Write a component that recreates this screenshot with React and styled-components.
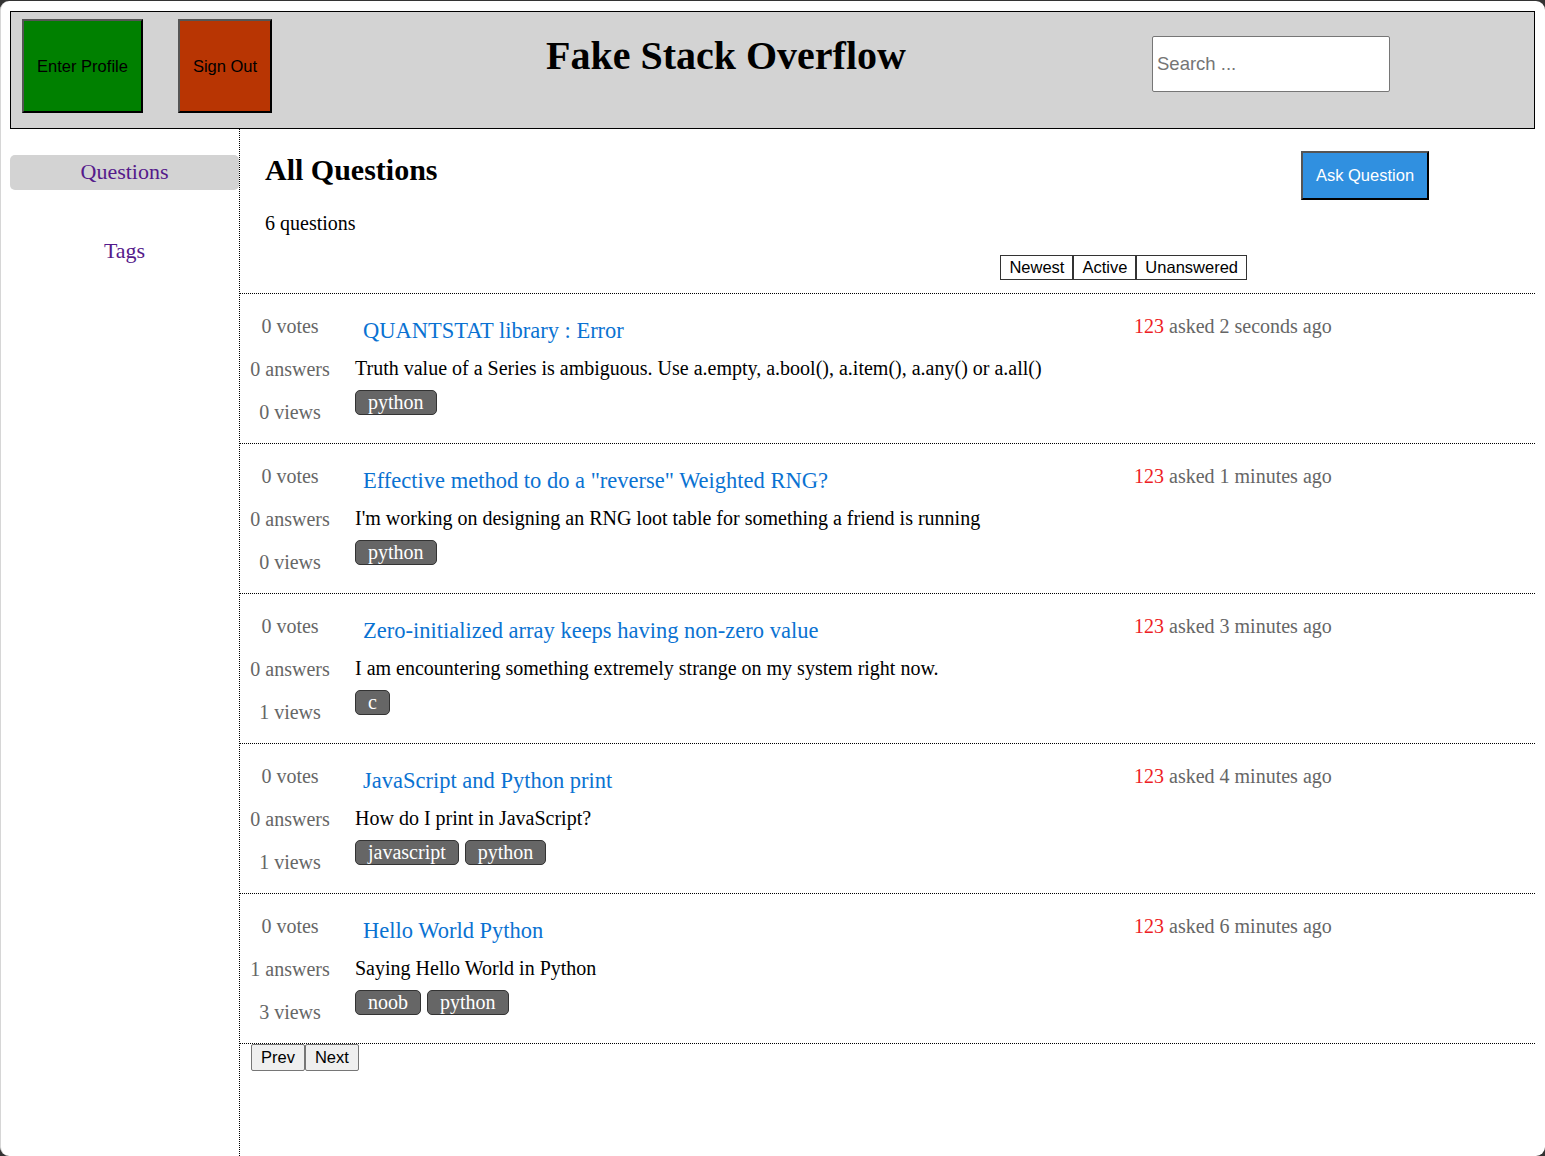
import React from 'react';
import styled, { createGlobalStyle } from 'styled-components';

const GlobalStyle = createGlobalStyle`
  html, body {
    margin: 0;
    padding: 0;
    background: #333;
  }
  body {
    font-family: "Liberation Serif", "Times New Roman", serif;
  }
  * {
    box-sizing: border-box;
  }
`;

const questions = [
  {
    title: 'QUANTSTAT library : Error',
    text: 'Truth value of a Series is ambiguous. Use a.empty, a.bool(), a.item(), a.any() or a.all()',
    tags: ['python'],
    votes: 0,
    answers: 0,
    views: 0,
    asked: '2 seconds ago',
  },
  {
    title: 'Effective method to do a "reverse" Weighted RNG?',
    text: "I'm working on designing an RNG loot table for something a friend is running",
    tags: ['python'],
    votes: 0,
    answers: 0,
    views: 0,
    asked: '1 minutes ago',
  },
  {
    title: 'Zero-initialized array keeps having non-zero value',
    text: 'I am encountering something extremely strange on my system right now.',
    tags: ['c'],
    votes: 0,
    answers: 0,
    views: 1,
    asked: '3 minutes ago',
  },
  {
    title: 'JavaScript and Python print',
    text: 'How do I print in JavaScript?',
    tags: ['javascript', 'python'],
    votes: 0,
    answers: 0,
    views: 1,
    asked: '4 minutes ago',
  },
  {
    title: 'Hello World Python',
    text: 'Saying Hello World in Python',
    tags: ['noob', 'python'],
    votes: 0,
    answers: 1,
    views: 3,
    asked: '6 minutes ago',
  },
];

export default function App() {
  return (
    <>
      <GlobalStyle />
      <Frame>
        <Header>
          <HeaderButton color="#008000" width={121}>Enter Profile</HeaderButton>
          <HeaderButton color="#b83503" width={94} style={{ marginLeft: 35 }}>Sign Out</HeaderButton>
          <SiteTitle>Fake Stack Overflow</SiteTitle>
          <SearchInput placeholder="Search ..." />
        </Header>

        <Body>
          <Sidebar>
            <NavItem active>Questions</NavItem>
            <NavItem>Tags</NavItem>
          </Sidebar>

          <Main>
            <TopRow>
              <PageTitle>All Questions</PageTitle>
              <AskButton>Ask Question</AskButton>
            </TopRow>
            <Count>6 questions</Count>
            <SortBar>
              <SortButton>Newest</SortButton>
              <SortButton>Active</SortButton>
              <SortButton>Unanswered</SortButton>
            </SortBar>

            <QuestionList>
              {questions.map(q => (
                <QuestionRow key={q.title}>
                  <Stats>
                    <Stat>{q.votes} votes</Stat>
                    <Stat>{q.answers} answers</Stat>
                    <Stat>{q.views} views</Stat>
                  </Stats>
                  <Content>
                    <QuestionTitle href="#">{q.title}</QuestionTitle>
                    <QuestionText>{q.text}</QuestionText>
                    <Tags>
                      {q.tags.map(t => (
                        <Tag key={t}>{t}</Tag>
                      ))}
                    </Tags>
                  </Content>
                  <Meta>
                    <Author>123</Author> asked {q.asked}
                  </Meta>
                </QuestionRow>
              ))}
            </QuestionList>

            <Pager>
              <PageButton>Prev</PageButton>
              <PageButton>Next</PageButton>
            </Pager>
          </Main>
        </Body>
      </Frame>
    </>
  );
}

const Frame = styled.div`
  margin-top: 1px;
  height: calc(100vh - 1px);
  background: #fff;
  border-radius: 9px;
  border-left: 1px solid #d6d6d6;
  display: flex;
  flex-direction: column;
  overflow: hidden;
`;

const Header = styled.header`
  margin: 10px 10px 0 9px;
  height: 118px;
  background: #d3d3d3;
  border: 1px solid #000;
  display: flex;
  align-items: flex-start;
  padding: 7px 0 0 11px;
`;

const HeaderButton = styled.button`
  width: ${p => p.width}px;
  height: 94px;
  background: ${p => p.color};
  border: 2px solid;
  border-color: #555 #000 #000 #555;
  font-family: "Liberation Sans", Arial, sans-serif;
  font-size: 16.5px;
  color: #000;
  padding: 0;
`;

const SiteTitle = styled.h1`
  margin: 14px 0 0 274px;
  font-size: 40px;
  line-height: 46px;
  font-weight: bold;
  color: #000;
  white-space: nowrap;
`;

const SearchInput = styled.input`
  margin: 17px 144px 0 auto;
  width: 238px;
  height: 56px;
  border: 1px solid #767676;
  border-radius: 2px;
  padding: 0 4px;
  font-family: "Liberation Sans", Arial, sans-serif;
  font-size: 18.5px;
  background: #fff;

  &::placeholder {
    color: #757575;
  }
`;

const Body = styled.div`
  flex: 1;
  display: flex;
`;

const Sidebar = styled.nav`
  width: 239px;
  flex-shrink: 0;
  border-right: 1px dotted #000;
  padding: 26px 0 0 9px;
  display: flex;
  flex-direction: column;
  gap: 44px;
`;

const NavItem = styled.a`
  display: block;
  text-align: center;
  font-size: 22px;
  line-height: 25px;
  padding: 4px 0 6px;
  color: #551a8b;
  border-radius: 5px;
  background: ${p => (p.active ? '#d3d3d3' : 'transparent')};
  cursor: pointer;
`;

const Main = styled.main`
  flex: 1;
  display: flex;
  flex-direction: column;
  margin-right: 10px;
`;

const TopRow = styled.div`
  display: flex;
  justify-content: space-between;
  align-items: flex-start;
  padding: 22px 106px 0 25px;
`;

const PageTitle = styled.h2`
  margin: 2px 0 0;
  font-size: 30px;
  line-height: 34px;
  font-weight: bold;
  color: #000;
`;

const AskButton = styled.button`
  width: 128px;
  height: 49px;
  background: #3090e0;
  color: #fff;
  border: 2px solid;
  border-color: #555 #000 #000 #555;
  font-family: "Liberation Sans", Arial, sans-serif;
  font-size: 16.5px;
  padding: 0;
`;

const Count = styled.div`
  margin: 12px 0 0 25px;
  font-size: 20px;
  line-height: 23px;
  color: #000;
`;

const SortBar = styled.div`
  display: flex;
  justify-content: flex-end;
  margin: 20px 288px 13px 0;
`;

const SortButton = styled.button`
  height: 25px;
  padding: 0 8px;
  background: #fff;
  border: 1px solid #333;
  font-family: "Liberation Sans", Arial, sans-serif;
  font-size: 16.5px;
  color: #000;
`;

const QuestionList = styled.div`
  border-top: 1px dotted #000;
`;

const QuestionRow = styled.div`
  height: 150px;
  border-bottom: 1px dotted #000;
  display: grid;
  grid-template-columns: 100px 779px 1fr;
  column-gap: 15px;
  padding-top: 21px;
`;

const Stats = styled.div`
  display: flex;
  flex-direction: column;
  align-items: center;
  gap: 20px;
`;

const Stat = styled.div`
  font-size: 20px;
  line-height: 23px;
  color: #666;
  white-space: nowrap;
`;

const Content = styled.div`
  display: flex;
  flex-direction: column;
  align-items: flex-start;
  padding-top: 3px;
`;

const QuestionTitle = styled.a`
  margin-left: 8px;
  font-size: 22.5px;
  line-height: 25px;
  color: #0a72d2;
  text-decoration: none;
`;

const QuestionText = styled.div`
  margin-top: 14px;
  font-size: 20px;
  line-height: 23px;
  color: #000;
`;

const Tags = styled.div`
  margin-top: 10px;
  display: flex;
  gap: 6px;
`;

const Tag = styled.span`
  height: 25px;
  padding: 0 12px;
  background: #666;
  border: 1px solid #333;
  border-radius: 5px;
  color: #fff;
  font-size: 20px;
  line-height: 23px;
`;

const Meta = styled.div`
  margin-left: -15px;
  font-size: 20px;
  line-height: 23px;
  color: #666;
  white-space: nowrap;
`;

const Author = styled.span`
  color: #ee1c25;
`;

const Pager = styled.div`
  display: flex;
  padding-left: 11px;
`;

const PageButton = styled.button`
  height: 27px;
  padding: 0 9px;
  background: #efefef;
  border: 1px solid #767676;
  border-radius: 2px;
  font-family: "Liberation Sans", Arial, sans-serif;
  font-size: 16.5px;
  color: #000;
`;
